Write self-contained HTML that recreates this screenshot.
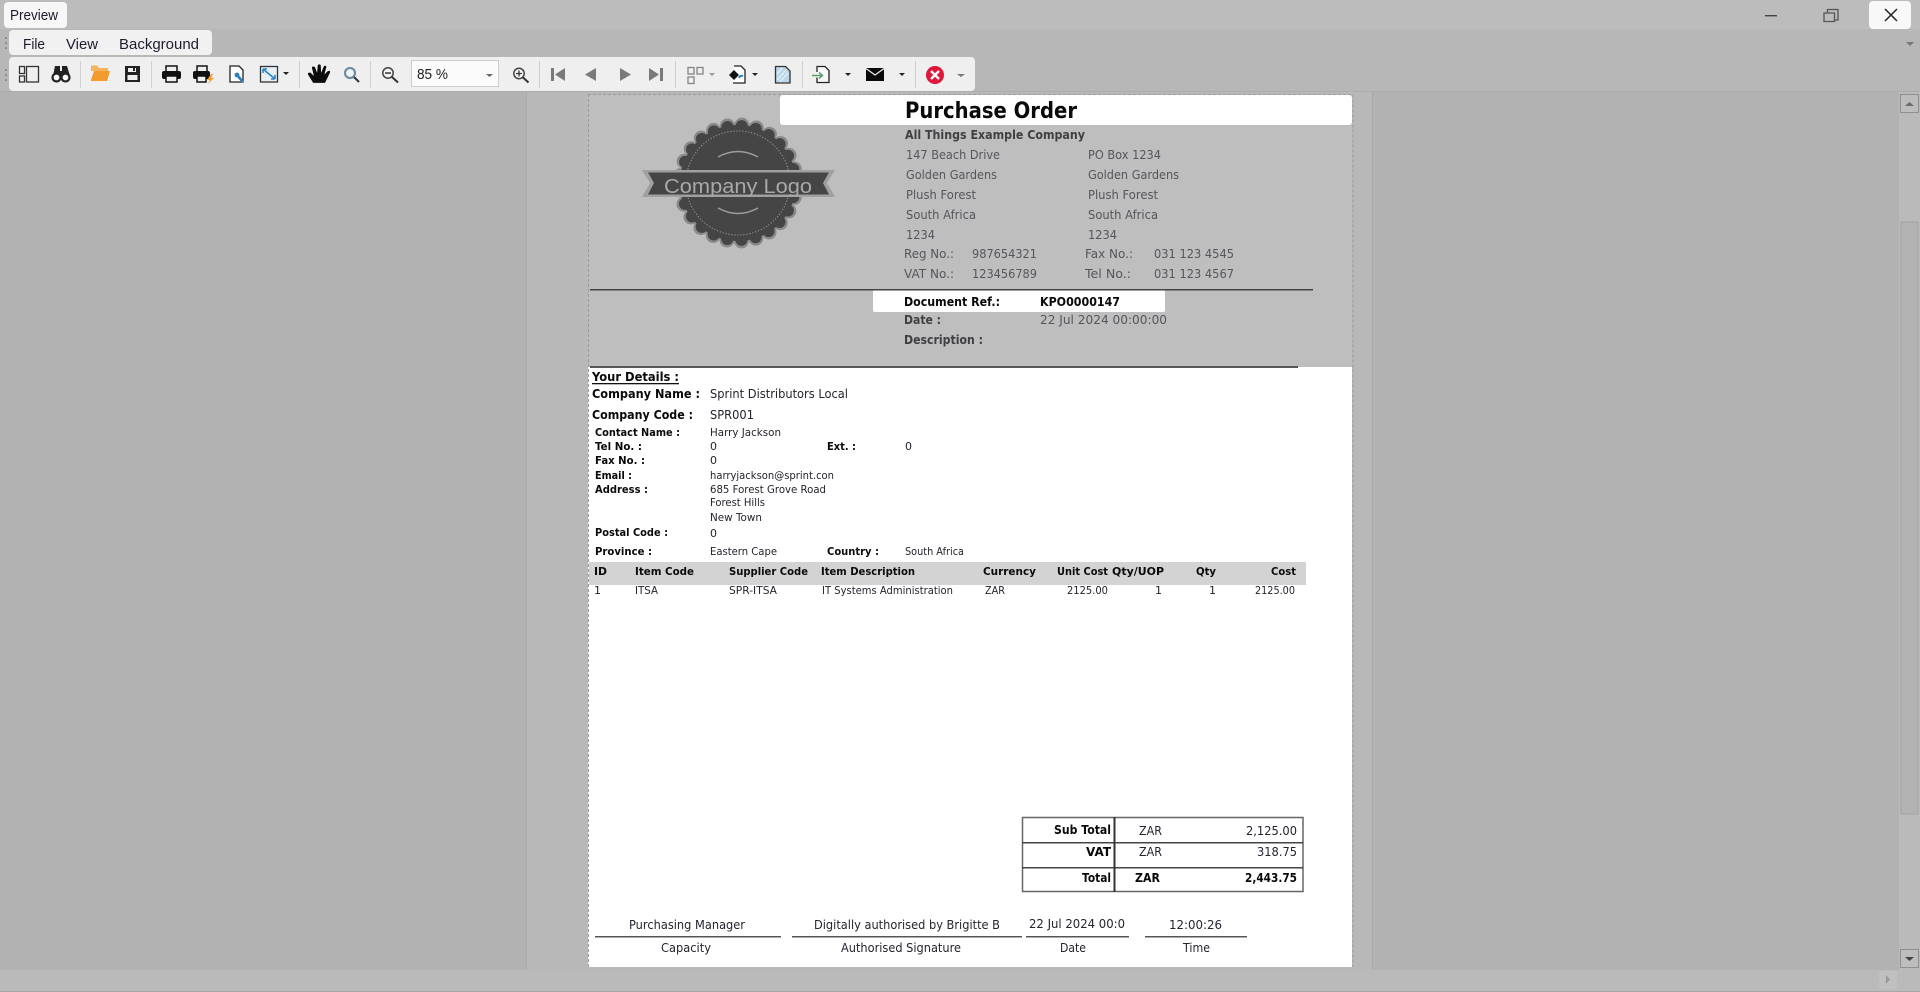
<!DOCTYPE html>
<html><head><meta charset="utf-8"><title>Preview</title>
<style>
html,body{margin:0;padding:0;width:1920px;height:992px;overflow:hidden;background:#b2b2b2}
svg{display:block}
.blur{filter:blur(.3px)}
text{font-family:"DejaVu Sans","Liberation Sans",sans-serif;white-space:pre}
.ui{font-family:"Liberation Sans",sans-serif;font-size:15px;fill:#1c1c30}
.a{font-size:12.5px;fill:#55555d}
.ab{font-size:12.5px;font-weight:bold;fill:#404044}
.k{font-size:12.5px;fill:#24242e}
.kb{font-size:12.5px;font-weight:bold;fill:#0a0a0a}
.s{font-size:11px;fill:#24242e}
.sb{font-size:11px;font-weight:bold;fill:#0a0a0a}
</style></head>
<body>
<svg xmlns="http://www.w3.org/2000/svg" width="1920" height="992" viewBox="0 0 1920 992">
<!-- chrome -->
<rect width="1920" height="992" fill="#b2b2b2"/>
<rect width="1920" height="29" fill="#bcbcbc"/>
<rect y="29" width="1920" height="62" fill="#b7b7b7"/>
<rect y="91" width="1920" height="1" fill="#adadad"/>
<rect x="4" y="2" width="63" height="26" rx="4" fill="#f7f7f7"/>
<text class="ui" x="10" y="20" textLength="48" lengthAdjust="spacingAndGlyphs">Preview</text>
<rect x="9" y="30" width="203" height="25" rx="4" fill="#f1f1f1"/>
<text class="ui" x="23" y="49" textLength="22" lengthAdjust="spacingAndGlyphs">File</text>
<text class="ui" x="66" y="49" textLength="32" lengthAdjust="spacingAndGlyphs">View</text>
<text class="ui" x="119" y="49" textLength="80" lengthAdjust="spacingAndGlyphs">Background</text>
<rect x="9" y="57" width="966" height="34" rx="4" fill="#efefef"/>
<g fill="#8e8e8e"><rect x="5" y="37" width="2" height="2"/><rect x="5" y="42" width="2" height="2"/><rect x="5" y="47" width="2" height="2"/><rect x="5" y="69" width="2" height="2"/><rect x="5" y="74" width="2" height="2"/><rect x="5" y="79" width="2" height="2"/></g>
<!-- window buttons -->
<rect x="1765" y="15" width="12" height="1.400" fill="#444"/>
<path d="M1827.500 13v-3.500h10.500v10.500h-3.500M1824 13h10.500v8.500h-10.500z" fill="none" stroke="#555" stroke-width="1.300"/>
<rect x="1869" y="1" width="42" height="28" rx="4" fill="#f8f8f8"/>
<path d="M1885 9l12 12M1897 9l-12 12" stroke="#222" stroke-width="1.500"/>
<path d="M1906 42h8l-4 4z" fill="#777"/>
<!-- toolbar separators -->
<g fill="#cfcfcf"><rect x="80" y="61" width="1" height="27"/><rect x="151" y="61" width="1" height="27"/><rect x="299" y="61" width="1" height="27"/><rect x="370" y="61" width="1" height="27"/><rect x="539" y="61" width="1" height="27"/><rect x="675" y="61" width="1" height="27"/><rect x="802" y="61" width="1" height="27"/><rect x="915" y="61" width="1" height="27"/></g>
<!-- panel -->
<g fill="none" stroke="#333" stroke-width="1.300"><rect x="19.500" y="66.500" width="5" height="7"/><rect x="19.500" y="76" width="5" height="6"/><rect x="26.500" y="66.500" width="12" height="15.500"/></g>
<!-- binoculars -->
<path d="M55 66h5v5h2v-5h5l3 10h-17z" fill="#222"/><circle cx="56.500" cy="77.500" r="4" fill="#fff" stroke="#222" stroke-width="2.200"/><circle cx="65.500" cy="77.500" r="4" fill="#fff" stroke="#222" stroke-width="2.200"/>
<!-- folder -->
<path d="M91 68v-2.500h6l2 2.500h9v3h-17z" fill="#f6b25e"/><path d="M91 80l3-9h16l-3 10h-16z" fill="#f39b2f"/>
<!-- save -->
<path d="M125 66h15v16h-15z" fill="#222"/><rect x="128" y="68" width="8" height="4" fill="#efefef"/><rect x="133" y="68" width="2" height="3" fill="#222"/><rect x="127.500" y="75" width="10" height="5" fill="#efefef"/>
<!-- print -->
<path d="M166 72v-6h11v6z" fill="none" stroke="#111" stroke-width="1.500"/><rect x="162" y="71" width="19" height="8" rx="2" fill="#111"/><rect x="166" y="76" width="11" height="6" fill="#efefef" stroke="#111" stroke-width="1.500"/>
<!-- print2 -->
<path d="M197 72v-6h10v6z" fill="none" stroke="#111" stroke-width="1.500"/><rect x="193" y="71" width="17" height="8" rx="2" fill="#111"/><rect x="197" y="76" width="9" height="6" fill="#efefef" stroke="#111" stroke-width="1.500"/><path d="M211 74l-4 6h3l-2 4 6-6h-3l2-4z" fill="#f39b2f"/>
<!-- doc wrench -->
<path d="M230 66h9l4 4v12h-13z" fill="#fff" stroke="#222" stroke-width="1.300"/><path d="M237 75l6 7" stroke="#2b7fb8" stroke-width="2.600"/><circle cx="237" cy="75" r="2.400" fill="#2b7fb8"/>
<!-- fit -->
<rect x="260.500" y="66.500" width="17" height="15.500" fill="#e9f0f5" stroke="#333" stroke-width="1.300"/><path d="M263 69l12 10M263 69h4M263 69v4M275 79h-4M275 79v-4" stroke="#2b86c5" stroke-width="1.600" fill="none"/>
<path d="M283 72h6l-3 3z" fill="#222"/>
<!-- hand -->
<g transform="translate(308 65) scale(1.300 1.050) translate(-308 -65)"><path d="M312 82l-4-8c-.5-1.500 1.500-2.500 2.500-1l2 2.500-1.500-8c0-1.500 2-1.500 2.500 0l1.500 5 .5-7c.2-1.500 2.200-1.500 2.300 0l.3 7 2-6c.5-1.300 2.300-1 2 .5l-1.500 7 2.500-3c1-1 2.500 0 1.800 1.300l-3.800 9.700z" fill="#0c0c0c"/></g>
<!-- zoom -->
<circle cx="350" cy="73" r="5" fill="#eef4f8" stroke="#6f8ea3" stroke-width="2.200"/><path d="M354 77l5 5" stroke="#333" stroke-width="2"/>
<circle cx="388" cy="73" r="5.200" fill="#f4f4f4" stroke="#444" stroke-width="1.500"/><path d="M392 77l6 5.500" stroke="#333" stroke-width="2"/><rect x="385" y="72.300" width="6" height="1.500" fill="#333"/>
<!-- combo -->
<rect x="411.500" y="60.500" width="87" height="26" fill="#fbfbfb" stroke="#cdcdcd"/>
<text x="417" y="79" font-size="15" style="font-family:'Liberation Sans',sans-serif;fill:#222" textLength="31" lengthAdjust="spacingAndGlyphs">85 %</text>
<path d="M486 74h7l-3.500 3z" fill="#666"/>
<!-- zoom in -->
<circle cx="519" cy="73.500" r="5.200" fill="#f4f4f4" stroke="#444" stroke-width="1.500"/><path d="M523 77.500l5.500 5" stroke="#333" stroke-width="2"/><path d="M516 73.500h6M519 70.500v6" stroke="#333" stroke-width="1.300"/>
<!-- nav -->
<rect x="551" y="68" width="3" height="13" fill="#7a7a7a"/><path d="M565 68v13l-10-6.500z" fill="#7a7a7a"/>
<path d="M596 68v13l-11-6.500z" fill="#7a7a7a"/><path d="M620 68v13l11-6.500z" fill="#7a7a7a"/>
<path d="M649 68v13l10-6.500z" fill="#7a7a7a"/><rect x="660" y="68" width="3" height="13" fill="#7a7a7a"/>
<!-- grid -->
<g fill="none" stroke="#858585" stroke-width="1.300"><rect x="688" y="67.500" width="6" height="6.500"/><rect x="697" y="67.500" width="6" height="6.500"/><rect x="688" y="77" width="6" height="6.500"/></g><path d="M709 73h6l-3 3z" fill="#999"/>
<!-- doc diamond -->
<path d="M734 66h7l4 4v13h-12" fill="#fff" stroke="#222" stroke-width="1.300"/><path d="M734 70l5 5-5 5-5-5z" fill="#111"/><path d="M739 78q1-3 4-2" stroke="#2b7fb8" stroke-width="2" fill="none"/>
<path d="M752 73h6l-3 3z" fill="#222"/>
<!-- doc hatched -->
<path d="M775.500 66.500h10l4.500 4.500v12h-14.500z" fill="#bcd7e9" stroke="#333" stroke-width="1.300"/><path d="M777 74l5-6M777 80l10-11M780 82l8-9" stroke="#e8f1f6" stroke-width="1.300"/>
<!-- import -->
<path d="M817 72v-5.500h8l4 4v12h-12v-5" fill="#f8f8f8" stroke="#222" stroke-width="1.300"/><path d="M812 75.500h10M819 72.500l3.500 3-3.500 3" stroke="#5f9f6e" stroke-width="1.500" fill="none"/>
<path d="M845 73h6l-3 3z" fill="#222"/>
<!-- mail -->
<rect x="866" y="68" width="18" height="13" fill="#0a0a0a"/><path d="M866 68.500l9 6.500 9-6.500" fill="none" stroke="#efefef" stroke-width="1.200"/>
<path d="M899 73h6l-3 3z" fill="#222"/>
<!-- red x -->
<circle cx="935" cy="75" r="9" fill="#e0163a"/><path d="M931 71l8 8M939 71l-8 8" stroke="#fff" stroke-width="2.400"/>
<path d="M957 74h8l-4 3z" fill="#777"/>

<!-- scrollbars -->
<rect x="1899" y="92" width="21" height="878" fill="#bababa"/>
<rect x="1900.500" y="94.500" width="18" height="18" fill="#bdbdbd" stroke="#8f8f8f"/><path d="M1905 106h9l-4.500-4z" fill="#6c6c6c"/>
<rect x="1901" y="222" width="17" height="592" fill="#b3b3b3" stroke="#a3a3a3"/>
<rect x="1900.500" y="949.500" width="18" height="18" fill="#bdbdbd" stroke="#8f8f8f"/><path d="M1905 957h9l-4.500 4z" fill="#444"/>
<!-- page -->
<rect x="526" y="92" width="846" height="880" fill="#b8b8b8"/>
<rect x="526" y="92" width="1" height="880" fill="#a9a9a9"/><rect x="1372" y="92" width="1" height="880" fill="#a9a9a9"/>
<rect x="588" y="95" width="764" height="272" fill="#bebebe"/>
<rect x="588" y="367" width="764" height="600" fill="#fff"/>
<rect x="780" y="95" width="572" height="30" rx="3" fill="#fff"/>
<rect x="873" y="290" width="292" height="22" rx="2" fill="#fff"/>
<path d="M588 94.500H1353V967M588.500 94V967" fill="none" stroke="#9c9c9c" stroke-dasharray="3 2"/>
<rect x="590" y="289" width="723" height="1.500" fill="#444"/>
<rect x="590" y="366" width="708" height="2" fill="#555"/>
<rect y="970" width="1920" height="22" fill="#bababa"/>
<rect x="1879" y="971" width="18" height="18" fill="#c0c0c0"/><path d="M1886 975v9l4-4.500z" fill="#999"/>
<rect y="991" width="1920" height="1" fill="#a8a8a8"/>

<!-- logo -->
<g>
<circle cx="738" cy="183" r="58" fill="none" stroke="#8a8a8a" stroke-width="15" stroke-dasharray="0 14.580" stroke-linecap="round"/>
<circle cx="738" cy="183" r="57" fill="none" stroke="#454545" stroke-width="12" stroke-dasharray="0 14.320" stroke-linecap="round"/>
<circle cx="738" cy="183" r="58" fill="#454545"/>
<circle cx="738" cy="183" r="52" fill="none" stroke="#9a9a9a" stroke-width="1" stroke-dasharray="1.200 1.800"/>
<path d="M716 157q20-11 40 0M716 208q20 11 40 0" fill="none" stroke="#9d9d9d" stroke-width="1.500" transform="translate(2 0)"/>
<path d="M642 170h193l-8 13 8 14h-193l8-14z" fill="#a0a0a0"/>
<path d="M648 172.500h181l-6 10.500 6 11.500h-181l6-11.500z" fill="#454545"/>
<text x="664" y="193" font-size="20" style="fill:#a8a8a8;font-family:'Liberation Sans',sans-serif" textLength="148" lengthAdjust="spacingAndGlyphs">Company Logo</text>
</g>

<g class="blur">
<!-- header text -->
<text x="905" y="118" font-size="22" font-weight="bold" fill="#0a0a0a" textLength="172" lengthAdjust="spacingAndGlyphs">Purchase Order</text>
<text class="ab" x="905" y="139" textLength="180" lengthAdjust="spacingAndGlyphs">All Things Example Company</text>
<text class="a" x="906" y="159" textLength="94" lengthAdjust="spacingAndGlyphs">147 Beach Drive</text>
<text class="a" x="906" y="179" textLength="91" lengthAdjust="spacingAndGlyphs">Golden Gardens</text>
<text class="a" x="906" y="199" textLength="70" lengthAdjust="spacingAndGlyphs">Plush Forest</text>
<text class="a" x="906" y="219" textLength="70" lengthAdjust="spacingAndGlyphs">South Africa</text>
<text class="a" x="906" y="239" textLength="29" lengthAdjust="spacingAndGlyphs">1234</text>
<text class="a" x="1088" y="159" textLength="73" lengthAdjust="spacingAndGlyphs">PO Box 1234</text>
<text class="a" x="1088" y="179" textLength="91" lengthAdjust="spacingAndGlyphs">Golden Gardens</text>
<text class="a" x="1088" y="199" textLength="70" lengthAdjust="spacingAndGlyphs">Plush Forest</text>
<text class="a" x="1088" y="219" textLength="70" lengthAdjust="spacingAndGlyphs">South Africa</text>
<text class="a" x="1088" y="239" textLength="29" lengthAdjust="spacingAndGlyphs">1234</text>
<text class="a" x="904" y="258" textLength="50" lengthAdjust="spacingAndGlyphs">Reg No.:</text>
<text class="a" x="972" y="258" textLength="65" lengthAdjust="spacingAndGlyphs">987654321</text>
<text class="a" x="1085" y="258" textLength="48" lengthAdjust="spacingAndGlyphs">Fax No.:</text>
<text class="a" x="1154" y="258" textLength="80" lengthAdjust="spacingAndGlyphs">031 123 4545</text>
<text class="a" x="904" y="278" textLength="50" lengthAdjust="spacingAndGlyphs">VAT No.:</text>
<text class="a" x="972" y="278" textLength="65" lengthAdjust="spacingAndGlyphs">123456789</text>
<text class="a" x="1085" y="278" textLength="46" lengthAdjust="spacingAndGlyphs">Tel No.:</text>
<text class="a" x="1154" y="278" textLength="80" lengthAdjust="spacingAndGlyphs">031 123 4567</text>
<text class="kb" x="904" y="306" textLength="96" lengthAdjust="spacingAndGlyphs">Document Ref.:</text>
<text class="kb" x="1040" y="306" textLength="80" lengthAdjust="spacingAndGlyphs">KPO0000147</text>
<text class="ab" x="904" y="324" textLength="37" lengthAdjust="spacingAndGlyphs">Date :</text>
<text class="a" x="1040" y="324" textLength="127" lengthAdjust="spacingAndGlyphs">22 Jul 2024 00:00:00</text>
<text class="ab" x="904" y="344" textLength="79" lengthAdjust="spacingAndGlyphs">Description :</text>

<!-- details -->
<text class="kb" x="592" y="381" textLength="87" lengthAdjust="spacingAndGlyphs">Your Details :</text>
<rect x="592" y="383" width="87" height="1.300" fill="#111"/>
<text class="kb" x="592" y="398" textLength="108" lengthAdjust="spacingAndGlyphs">Company Name :</text>
<text class="k" x="710" y="398" textLength="138" lengthAdjust="spacingAndGlyphs">Sprint Distributors Local</text>
<text class="kb" x="592" y="419" textLength="101" lengthAdjust="spacingAndGlyphs">Company Code :</text>
<text class="k" x="710" y="419" textLength="44" lengthAdjust="spacingAndGlyphs">SPR001</text>
<text class="sb" x="595" y="436" textLength="85" lengthAdjust="spacingAndGlyphs">Contact Name :</text>
<text class="s" x="710" y="436" textLength="71" lengthAdjust="spacingAndGlyphs">Harry Jackson</text>
<text class="sb" x="595" y="450" textLength="47" lengthAdjust="spacingAndGlyphs">Tel No. :</text>
<text class="s" x="710" y="450">0</text>
<text class="sb" x="827" y="450" textLength="29" lengthAdjust="spacingAndGlyphs">Ext. :</text>
<text class="s" x="905" y="450">0</text>
<text class="sb" x="595" y="464" textLength="50" lengthAdjust="spacingAndGlyphs">Fax No. :</text>
<text class="s" x="710" y="464">0</text>
<text class="sb" x="595" y="479" textLength="37" lengthAdjust="spacingAndGlyphs">Email :</text>
<text class="s" x="710" y="479" textLength="124" lengthAdjust="spacingAndGlyphs">harryjackson@sprint.con</text>
<text class="sb" x="595" y="493" textLength="53" lengthAdjust="spacingAndGlyphs">Address :</text>
<text class="s" x="710" y="493" textLength="116" lengthAdjust="spacingAndGlyphs">685 Forest Grove Road</text>
<text class="s" x="710" y="506" textLength="55" lengthAdjust="spacingAndGlyphs">Forest Hills</text>
<text class="s" x="710" y="521" textLength="52" lengthAdjust="spacingAndGlyphs">New Town</text>
<text class="sb" x="595" y="536" textLength="73" lengthAdjust="spacingAndGlyphs">Postal Code :</text>
<text class="s" x="710" y="537">0</text>
<text class="sb" x="595" y="555" textLength="57" lengthAdjust="spacingAndGlyphs">Province :</text>
<text class="s" x="710" y="555" textLength="67" lengthAdjust="spacingAndGlyphs">Eastern Cape</text>
<text class="sb" x="827" y="555" textLength="52" lengthAdjust="spacingAndGlyphs">Country :</text>
<text class="s" x="905" y="555" textLength="59" lengthAdjust="spacingAndGlyphs">South Africa</text>

<!-- table -->
<rect x="589" y="562" width="717" height="23" fill="#d3d3d3"/>
<text class="sb" x="594" y="575" textLength="13" lengthAdjust="spacingAndGlyphs">ID</text>
<text class="sb" x="635" y="575" textLength="59" lengthAdjust="spacingAndGlyphs">Item Code</text>
<text class="sb" x="729" y="575" textLength="79" lengthAdjust="spacingAndGlyphs">Supplier Code</text>
<text class="sb" x="821" y="575" textLength="94" lengthAdjust="spacingAndGlyphs">Item Description</text>
<text class="sb" x="983" y="575" textLength="53" lengthAdjust="spacingAndGlyphs">Currency</text>
<text class="sb" x="1057" y="575" textLength="51" lengthAdjust="spacingAndGlyphs">Unit Cost</text>
<text class="sb" x="1112" y="575" textLength="52" lengthAdjust="spacingAndGlyphs">Qty/UOP</text>
<text class="sb" x="1196" y="575" textLength="20" lengthAdjust="spacingAndGlyphs">Qty</text>
<text class="sb" x="1271" y="575" textLength="25" lengthAdjust="spacingAndGlyphs">Cost</text>
<text class="s" x="594" y="594">1</text>
<text class="s" x="635" y="594" textLength="23" lengthAdjust="spacingAndGlyphs">ITSA</text>
<text class="s" x="729" y="594" textLength="48" lengthAdjust="spacingAndGlyphs">SPR-ITSA</text>
<text class="s" x="822" y="594" textLength="131" lengthAdjust="spacingAndGlyphs">IT Systems Administration</text>
<text class="s" x="985" y="594" textLength="20" lengthAdjust="spacingAndGlyphs">ZAR</text>
<text class="s" x="1067" y="594" textLength="41" lengthAdjust="spacingAndGlyphs">2125.00</text>
<text class="s" x="1155" y="594">1</text>
<text class="s" x="1209" y="594">1</text>
<text class="s" x="1255" y="594" textLength="40" lengthAdjust="spacingAndGlyphs">2125.00</text>

<!-- totals -->
<rect x="1022.500" y="817.500" width="280.500" height="74" fill="#fff" stroke="#666" stroke-width="1.500"/>
<rect x="1022" y="842" width="281" height="1.500" fill="#444"/>
<rect x="1022" y="867" width="281" height="1.500" fill="#444"/>
<rect x="1113.500" y="817" width="2" height="75" fill="#333"/>
<text class="kb" x="1054" y="834" textLength="57" lengthAdjust="spacingAndGlyphs">Sub Total</text>
<text class="k" x="1139" y="835" textLength="23" lengthAdjust="spacingAndGlyphs">ZAR</text>
<text class="k" x="1246" y="835" textLength="51" lengthAdjust="spacingAndGlyphs">2,125.00</text>
<text class="kb" x="1086" y="856" textLength="25" lengthAdjust="spacingAndGlyphs">VAT</text>
<text class="k" x="1139" y="856" textLength="23" lengthAdjust="spacingAndGlyphs">ZAR</text>
<text class="k" x="1257" y="856" textLength="40" lengthAdjust="spacingAndGlyphs">318.75</text>
<text class="kb" x="1082" y="882" textLength="29" lengthAdjust="spacingAndGlyphs">Total</text>
<text class="kb" x="1135" y="882" textLength="25" lengthAdjust="spacingAndGlyphs">ZAR</text>
<text class="kb" x="1245" y="882" textLength="52" lengthAdjust="spacingAndGlyphs">2,443.75</text>

<!-- footer -->
<text class="k" x="629" y="929" textLength="116" lengthAdjust="spacingAndGlyphs">Purchasing Manager</text>
<text class="k" x="814" y="929" textLength="186" lengthAdjust="spacingAndGlyphs">Digitally authorised by Brigitte B</text>
<text class="k" x="1029" y="928" textLength="96" lengthAdjust="spacingAndGlyphs">22 Jul 2024 00:0</text>
<text class="k" x="1169" y="929" textLength="53" lengthAdjust="spacingAndGlyphs">12:00:26</text>
<g fill="#555"><rect x="595" y="936" width="186" height="1.500"/><rect x="792" y="936" width="230" height="1.500"/><rect x="1026" y="936" width="103" height="1.500"/><rect x="1145" y="936" width="102" height="1.500"/></g>
<text class="k" x="661" y="952" textLength="50" lengthAdjust="spacingAndGlyphs">Capacity</text>
<text class="k" x="841" y="952" textLength="120" lengthAdjust="spacingAndGlyphs">Authorised Signature</text>
<text class="k" x="1060" y="952" textLength="26" lengthAdjust="spacingAndGlyphs">Date</text>
<text class="k" x="1183" y="952" textLength="27" lengthAdjust="spacingAndGlyphs">Time</text>
</g>
</svg>
</body></html>
